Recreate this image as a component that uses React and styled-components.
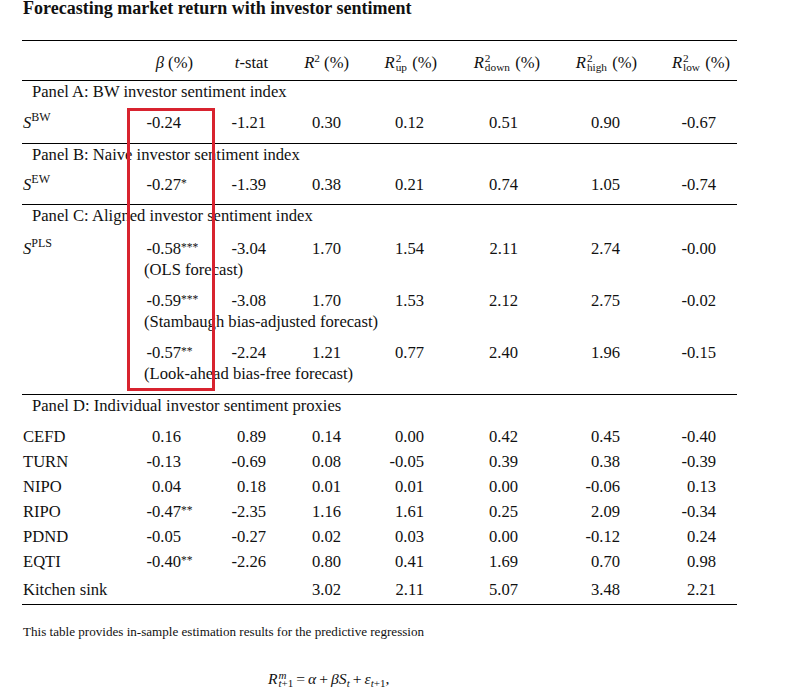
import React from "react";
import styled, { createGlobalStyle } from "styled-components";

const Global = createGlobalStyle`
  html, body { margin: 0; padding: 0; background: #fff; }
  body { font-family: "Liberation Serif", "Times New Roman", serif; color: #111; }
`;

const GRID = "108px 70px 80px 80px 90px 100px 100px 87px";

const COLS = [
  { dp: 19, hp: 7 },
  { dp: 14, hp: 12 },
  { dp: 19, hp: 11 },
  { dp: 26, hp: 13 },
  { dp: 32, hp: 10 },
  { dp: 30, hp: 13 },
  { dp: 21, hp: 7 },
];

const Page = styled.div`
  padding-left: 22px;
  width: 715px;
`;

const Title = styled.h1`
  margin: 0;
  font-size: 18px;
  line-height: 16px;
  font-weight: bold;
  padding-left: 1px;
  white-space: nowrap;
`;

const Table = styled.div`
  position: relative;
  margin-top: 24px;
  font-size: 16.6px;
`;

const Rule = styled.div`
  height: 1px;
  background: #000;
`;

const Row = styled.div`
  display: grid;
  grid-template-columns: ${GRID};
  line-height: ${(p) => p.$lh || 22}px;
  padding-top: ${(p) => p.$pt || 0}px;
  padding-bottom: ${(p) => p.$pb || 0}px;
`;

const Label = styled.div`
  text-align: left;
  white-space: nowrap;
  padding-left: 1px;
`;

const Cell = styled.div`
  text-align: right;
  white-space: nowrap;
  padding-right: ${(p) => p.$pr}px;
`;

const Note = styled.div`
  grid-column: 2 / -1;
  padding-left: 14px;
  text-align: left;
  white-space: nowrap;
`;

const PanelTitle = styled.div`
  line-height: 22px;
  padding-left: 10px;
  white-space: nowrap;
`;

const I = styled.i`
  font-style: italic;
`;

const Sup = styled.span`
  font-size: 11.3px;
  vertical-align: 6px;
  line-height: 0;
`;

const VarSup = styled.span`
  font-size: 12px;
  vertical-align: 7px;
  line-height: 0;
`;

const Stack = styled.span`
  display: inline-flex;
  flex-direction: column;
  align-items: flex-start;
  text-align: left;
  font-size: 11.3px;
  line-height: 9px;
  vertical-align: 6px;
  margin-left: 1px;
  margin-right: 1px;
`;

const Stars = styled.span`
  display: inline-block;
  width: 0;
  white-space: nowrap;
  font-size: 11.5px;
  vertical-align: 3px;
  line-height: 0;
`;

const Highlight = styled.div`
  position: absolute;
  left: 105px;
  top: 68px;
  width: 88px;
  height: 283px;
  box-sizing: border-box;
  border: 3px solid #d8232f;
  pointer-events: none;
`;

const Caption = styled.p`
  margin: 19px 0 0;
  font-size: 13.1px;
  line-height: 16px;
  padding-left: 1px;
  white-space: nowrap;
`;

const Formula = styled.div`
  margin-top: 30px;
  font-size: 15.6px;
  line-height: 18px;
  padding-left: 246px;
  white-space: nowrap;
`;

const MathSub = styled.span`
  display: inline-flex;
  flex-direction: column;
  align-items: flex-start;
  font-size: 11px;
  line-height: 8px;
  vertical-align: 5px;
  margin-left: 1px;
`;

const Sub = styled.sub`
  font-size: 11px;
  vertical-align: -3px;
  line-height: 0;
`;

const Op = styled.span`
  padding: 0 3px;
`;

function Num({ v }) {
  const m = v.match(/^([^*]*)(\**)$/);
  return (
    <>
      {m[1]}
      {m[2] ? <Stars>{m[2]}</Stars> : null}
    </>
  );
}

function DataRow({ label, values, lh, pt, pb }) {
  return (
    <Row $lh={lh} $pt={pt} $pb={pb}>
      <Label>{label}</Label>
      {values.map((v, i) => (
        <Cell key={i} $pr={COLS[i].dp}>
          {v ? <Num v={v} /> : null}
        </Cell>
      ))}
    </Row>
  );
}

const Var = ({ s }) => (
  <>
    <I>S</I>
    <VarSup>{s}</VarSup>
  </>
);

const RStack = ({ sub }) => (
  <>
    <I>R</I>
    <Stack>
      <span>2</span>
      <span>{sub}</span>
    </Stack>{" "}
    (%)
  </>
);

const headers = [
  <>
    <I>β</I> (%)
  </>,
  <>
    <I>t</I>-stat
  </>,
  <>
    <I>R</I>
    <Sup>2</Sup> (%)
  </>,
  <RStack sub="up" />,
  <RStack sub="down" />,
  <RStack sub="high" />,
  <RStack sub="low" />,
];

const panelD = [
  ["CEFD", ["0.16", "0.89", "0.14", "0.00", "0.42", "0.45", "-0.40"]],
  ["TURN", ["-0.13", "-0.69", "0.08", "-0.05", "0.39", "0.38", "-0.39"]],
  ["NIPO", ["0.04", "0.18", "0.01", "0.01", "0.00", "-0.06", "0.13"]],
  ["RIPO", ["-0.47**", "-2.35", "1.16", "1.61", "0.25", "2.09", "-0.34"]],
  ["PDND", ["-0.05", "-0.27", "0.02", "0.03", "0.00", "-0.12", "0.24"]],
  ["EQTI", ["-0.40**", "-2.26", "0.80", "0.41", "1.69", "0.70", "0.98"]],
];

export default function App() {
  return (
    <Page>
      <Global />
      <Title>Forecasting market return with investor sentiment</Title>
      <Table>
        <Rule />
        <Row $pt={11} $pb={6}>
          <Label />
          {headers.map((h, i) => (
            <Cell key={i} $pr={COLS[i].hp}>
              {h}
            </Cell>
          ))}
        </Row>
        <Rule />
        <PanelTitle>Panel A: BW investor sentiment index</PanelTitle>
        <DataRow
          label={<Var s="BW" />}
          values={["-0.24", "-1.21", "0.30", "0.12", "0.51", "0.90", "-0.67"]}
          pt={9}
          pb={9}
        />
        <Rule />
        <PanelTitle>Panel B: Naive investor sentiment index</PanelTitle>
        <DataRow
          label={<Var s="EW" />}
          values={["-0.27*", "-1.39", "0.38", "0.21", "0.74", "1.05", "-0.74"]}
          pt={8}
          pb={8}
        />
        <Rule />
        <PanelTitle>Panel C: Aligned investor sentiment index</PanelTitle>
        <DataRow
          label={<Var s="PLS" />}
          values={["-0.58***", "-3.04", "1.70", "1.54", "2.11", "2.74", "-0.00"]}
          lh={21}
          pt={11}
        />
        <Row $lh={21}>
          <Note>(OLS forecast)</Note>
        </Row>
        <DataRow
          label=""
          values={["-0.59***", "-3.08", "1.70", "1.53", "2.12", "2.75", "-0.02"]}
          lh={21}
          pt={10}
        />
        <Row $lh={21}>
          <Note>(Stambaugh bias-adjusted forecast)</Note>
        </Row>
        <DataRow
          label=""
          values={["-0.57**", "-2.24", "1.21", "0.77", "2.40", "1.96", "-0.15"]}
          lh={21}
          pt={10}
        />
        <Row $lh={21} $pb={10}>
          <Note>(Look-ahead bias-free forecast)</Note>
        </Row>
        <Rule />
        <PanelTitle>Panel D: Individual investor sentiment proxies</PanelTitle>
        {panelD.map(([l, v], i) => (
          <DataRow key={l} label={l} values={v} lh={25} pt={i === 0 ? 7 : 0} />
        ))}
        <DataRow
          label="Kitchen sink"
          values={["", "", "3.02", "2.11", "5.07", "3.48", "2.21"]}
          lh={25}
          pt={3}
          pb={2}
        />
        <Rule />
        <Highlight />
      </Table>
      <Caption>
        This table provides in-sample estimation results for the predictive regression
      </Caption>
      <Formula>
        <I>R</I>
        <MathSub>
          <I>m</I>
          <span>
            <I>t</I>+1
          </span>
        </MathSub>
        <Op>=</Op>
        <I>α</I>
        <Op>+</Op>
        <I>βS</I>
        <Sub>
          <I>t</I>
        </Sub>
        <Op>+</Op>
        <I>ε</I>
        <Sub>
          <I>t</I>+1
        </Sub>
        ,
      </Formula>
    </Page>
  );
}
